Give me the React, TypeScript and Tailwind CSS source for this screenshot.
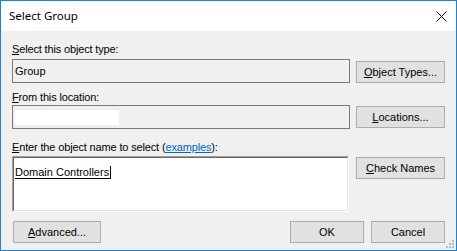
import React from "react";

const ui = { fontFamily: '"Liberation Sans", Arial, sans-serif' };

const Btn = ({ k, rest, className = "" }: { k: string; rest: string; className?: string }) => (
  <div
    className={`h-[22px] flex items-center justify-center bg-[#e1e1e1] border border-[#adadad] text-[11px] leading-[13px] text-black ${className}`}
  >
    <span>
      <span className="underline underline-offset-1">{k}</span>
      {rest}
    </span>
  </div>
);

const Label = ({ k, rest, children }: { k: string; rest: string; children?: React.ReactNode }) => (
  <div className="text-[11px] leading-[13px] text-black h-[13px] tracking-[-0.15px]">
    <span className="underline underline-offset-1">{k}</span>
    {rest}
    {children}
  </div>
);

function Grip() {
  const dots = [
    [451, 239],
    [448, 242],
    [451, 242],
    [445, 245],
    [448, 245],
    [451, 245],
  ];
  return (
    <svg className="absolute left-0 top-0 pointer-events-none" width="457" height="251">
      {dots.map(([x, y]) => (
        <rect key={`${x}-${y}`} x={x} y={y} width="2" height="2" fill="#bcbcbc" />
      ))}
    </svg>
  );
}

export default function App() {
  return (
    <div className="relative w-[457px] h-[251px] border border-[#1883d7] bg-[#f0f0f0] flex flex-col overflow-hidden" style={ui}>
      {/* title bar */}
      <div className="h-[30px] bg-white flex items-center justify-between pl-[8px] pr-[9px] shrink-0">
        <span className="text-[11.5px] text-black" style={{ fontFamily: '"Noto Sans", "Open Sans", sans-serif' }}>
          Select Group
        </span>
        <svg width="11" height="11" viewBox="0 0 11 11">
          <path d="M0.5 0.5 L10.5 10.5 M10.5 0.5 L0.5 10.5" stroke="#000" strokeWidth="1" />
        </svg>
      </div>

      {/* body */}
      <div className="flex-1 pl-[11px] pr-[11px] pt-[12px] flex flex-col">
        <Label k="S" rest="elect this object type:" />
        <div className="flex gap-[6px] mt-[3px]">
          <div className="w-[338px] h-[24px] border border-[#7a7a7a] bg-[#f0f0f0] flex items-center pl-[2px] text-[11px] leading-[13px]">
            Group
          </div>
          <Btn k="O" rest="bject Types..." className="w-[89px] mt-[2px]" />
        </div>

        <div className="mt-[8px]">
          <Label k="F" rest="rom this location:" />
        </div>
        <div className="flex gap-[6px] mt-[1px]">
          <div className="w-[338px] h-[24px] border border-[#7a7a7a] bg-[#f0f0f0] flex items-center pl-[2px]">
            <div className="w-[104px] h-[15px] bg-white" />
          </div>
          <Btn k="L" rest="ocations..." className="w-[89px] mt-[1px]" />
        </div>

        <div className="mt-[12px]">
          <Label k="E" rest="nter the object name to select (">
            <span className="text-[#0066cc] underline underline-offset-1">examples</span>
            ):
          </Label>
        </div>
        <div className="flex gap-[6px] mt-[2px]">
          <div className="w-[337px] h-[56px] border border-t-[#a0a0a0] border-l-[#a0a0a0] border-b-white border-r-white">
            <div className="w-full h-full bg-white border border-t-[#696969] border-l-[#696969] border-b-[#e3e3e3] border-r-[#e3e3e3] pl-[1px] pt-[1px]">
              <span className="inline-block text-[11px] leading-[12px] border-b border-r border-black pr-[1px] text-black">
                Domain Controllers
              </span>
            </div>
          </div>
          <Btn k="C" rest="heck Names" className="w-[89px] mt-[1px] ml-[1px]" />
        </div>

        <div className="flex mt-[9px]">
          <Btn k="A" rest="dvanced..." className="w-[88px] ml-[1px]" />
          <div className="flex-1" />
          <Btn k="" rest="OK" className="w-[74px]" />
          <Btn k="" rest="Cancel" className="w-[74px] ml-[7px]" />
        </div>
      </div>
      <Grip />
    </div>
  );
}
